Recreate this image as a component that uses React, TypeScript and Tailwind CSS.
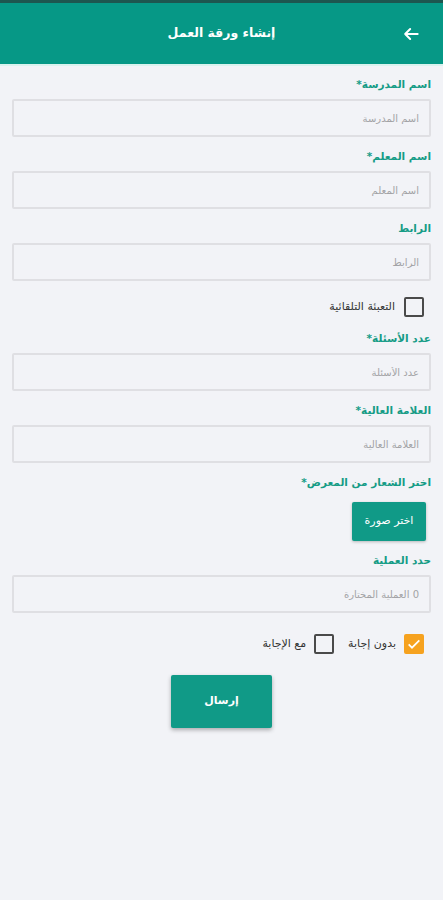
import React, { useState } from 'react';

type FieldProps = {
  label: string;
  placeholder: string;
  className?: string;
};

function Field({ label, placeholder, className = '' }: FieldProps) {
  return (
    <div className={className}>
      <label className="block h-4 text-[10.5px] font-bold leading-4 text-[#169c86]">{label}</label>
      <input
        type="text"
        placeholder={placeholder}
        className="mt-[7px] block h-[38px] w-full rounded-[2px] border-2 border-[#dfdfe3] bg-[#f2f3f7] px-[10px] text-[10px] text-gray-700 placeholder-[#a3a3a6] outline-none"
      />
    </div>
  );
}

function Box({ checked, onClick }: { checked: boolean; onClick: () => void }) {
  return (
    <button
      type="button"
      onClick={onClick}
      className={
        checked
          ? 'flex h-[20px] w-[20px] items-center justify-center rounded-[2px] bg-[#f6a21f]'
          : 'flex h-[20px] w-[20px] items-center justify-center rounded-[2px] border-2 border-[#4a4a4a]'
      }
    >
      {checked && (
        <svg viewBox="0 0 24 24" className="h-[16px] w-[16px]" fill="none" stroke="white" strokeWidth="2.6">
          <path d="M4 12.5l5 5L20 6.5" />
        </svg>
      )}
    </button>
  );
}

export default function App() {
  const [autoFill, setAutoFill] = useState(false);
  const [noAnswer, setNoAnswer] = useState(true);
  const [withAnswer, setWithAnswer] = useState(false);

  return (
    <div className="min-h-screen bg-[#f2f3f7] font-['DejaVu_Sans',sans-serif]">
      {/* status strip + app bar */}
      <div className="h-[3px] bg-[#1d564f]" />
      <header className="grid h-[63px] grid-cols-[1fr_auto_1fr] items-center border-b-2 border-[#d9f2ee] bg-[#069886]">
        <div />
        <h1 dir="rtl" className="text-[12.5px] font-bold text-white">إنشاء ورقة العمل</h1>
        <div className="flex justify-end pr-[22px]">
          <svg viewBox="0 0 24 24" className="h-[20px] w-[20px]" fill="none" stroke="white" strokeWidth="2.4" strokeLinecap="round" strokeLinejoin="round">
            <path d="M20 12H5M11 6l-6 6 6 6" />
          </svg>
        </div>
      </header>

      <form dir="rtl" className="px-3 pt-[10px]" onSubmit={(e) => e.preventDefault()}>
        <Field label="اسم المدرسة*" placeholder="اسم المدرسة" />
        <Field label="اسم المعلم*" placeholder="اسم المعلم" className="mt-[11px]" />
        <Field label="الرابط" placeholder="الرابط" className="mt-[11px]" />

        <div className="mt-[16px] flex items-center gap-[9px] pr-[7px]">
          <Box checked={autoFill} onClick={() => setAutoFill(!autoFill)} />
          <span className="text-[11px] text-[#333]">التعبئة التلقائية</span>
        </div>

        <Field label="عدد الأسئلة*" placeholder="عدد الأسئلة" className="mt-[13px]" />
        <Field label="العلامة العالية*" placeholder="العلامة العالية" className="mt-[11px]" />

        <div className="mt-[11px]">
          <label className="block h-4 text-[10.5px] font-bold leading-4 text-[#169c86]">اختر الشعار من المعرض*</label>
          <button
            type="button"
            className="mr-[5px] mt-[12px] h-[39px] w-[74px] rounded-[2px] bg-[#109a87] text-[11px] text-white shadow-[0_1px_3px_rgba(0,0,0,0.25)]"
          >
            اختر صورة
          </button>
        </div>

        <Field label="حدد العملية" placeholder="0 العملية المختارة" className="mt-[11px]" />

        <div className="mt-[21px] flex items-center pr-[7px]">
          <Box checked={noAnswer} onClick={() => setNoAnswer(!noAnswer)} />
          <span className="mr-[8px] text-[11px] text-[#333]">بدون إجابة</span>
          <div className="mr-[14px]">
            <Box checked={withAnswer} onClick={() => setWithAnswer(!withAnswer)} />
          </div>
          <span className="mr-[8px] text-[11px] text-[#333]">مع الإجابة</span>
        </div>

        <div className="mt-[21px] flex justify-center">
          <button
            type="submit"
            className="h-[53px] w-[101px] rounded-[2px] bg-[#109a87] text-[11px] font-semibold text-white shadow-[0_2px_4px_rgba(0,0,0,0.3)]"
          >
            إرسال
          </button>
        </div>
      </form>
    </div>
  );
}
